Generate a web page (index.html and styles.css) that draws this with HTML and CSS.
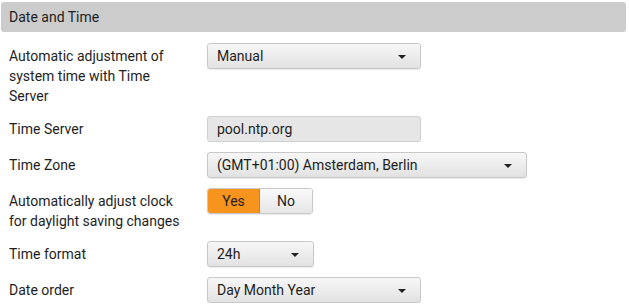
FILE: index.html
```html
<!DOCTYPE html>
<html lang="en">

<head>
  <meta charset="UTF-8">
  <title>Date and Time</title>
  <link rel="stylesheet" href="styles.css">
</head>

<body>
  <div class="panel">
    <div class="panel-head">Date and Time</div>

    <div class="rows">
      <div class="row">
        <div class="label">Automatic adjustment of system time with Time Server</div>
        <div class="select w213">Manual<span class="caret"></span></div>
      </div>

      <div class="row">
        <div class="label">Time Server</div>
        <div class="input w213">pool.ntp.org</div>
      </div>

      <div class="row">
        <div class="label">Time Zone</div>
        <div class="select w319">(GMT+01:00) Amsterdam, Berlin<span class="caret"></span></div>
      </div>

      <div class="row">
        <div class="label">Automatically adjust clock for daylight saving changes</div>
        <div class="toggle">
          <span class="opt on">Yes</span><span class="opt">No</span>
        </div>
      </div>

      <div class="row">
        <div class="label">Time format</div>
        <div class="select w106">24h<span class="caret"></span></div>
      </div>

      <div class="row">
        <div class="label">Date order</div>
        <div class="select w213">Day Month Year<span class="caret"></span></div>
      </div>
    </div>
  </div>
</body>

</html>
```

FILE: styles.css
```css
* {
  margin: 0;
  padding: 0;
  box-sizing: border-box;
}

body {
  font-family: Roboto, "Liberation Sans", sans-serif;
  font-size: 14px;
  color: #1e1e1e;
  background: #fff;
}

.panel {
  padding: 2px 3px 0 1px;
}

.panel-head {
  height: 30px;
  line-height: 30px;
  padding-left: 8px;
  background: #cccccc;
  border-radius: 3px;
}

.rows {
  display: flex;
  flex-direction: column;
  gap: 10px;
  padding-top: 11px;
}

.row {
  display: flex;
  align-items: flex-start;
}

.label {
  width: 206px;
  padding: 3px 24px 0 8px;
  line-height: 20px;
}

.select,
.input {
  position: relative;
  height: 26px;
  line-height: 24px;
  padding-left: 9px;
  border: 1px solid #c8c8c8;
  border-radius: 3px;
  white-space: nowrap;
}

.select {
  background: linear-gradient(#f7f7f7, #e2e2e2);
  box-shadow: 0 1px 1px rgba(0, 0, 0, 0.08);
}

.input {
  background: #e6e6e6;
  border-color: #cfcfcf;
}

.caret {
  position: absolute;
  right: 14px;
  top: 11px;
  border-left: 4px solid transparent;
  border-right: 4px solid transparent;
  border-top: 4px solid #222;
}

.w213 {
  width: 214px;
}

.w319 {
  width: 320px;
}

.w106 {
  width: 107px;
}

.toggle {
  display: flex;
  height: 26px;
  border: 1px solid #c8c8c8;
  border-radius: 3px;
  overflow: hidden;
  box-shadow: 0 1px 1px rgba(0, 0, 0, 0.08);
}

.opt {
  width: 52px;
  line-height: 24px;
  text-align: center;
  background: linear-gradient(#fafafa, #e6e6e6);
}

.opt.on {
  background: #f7941d;
  border-right: 1px solid #d97f10;
}
```
